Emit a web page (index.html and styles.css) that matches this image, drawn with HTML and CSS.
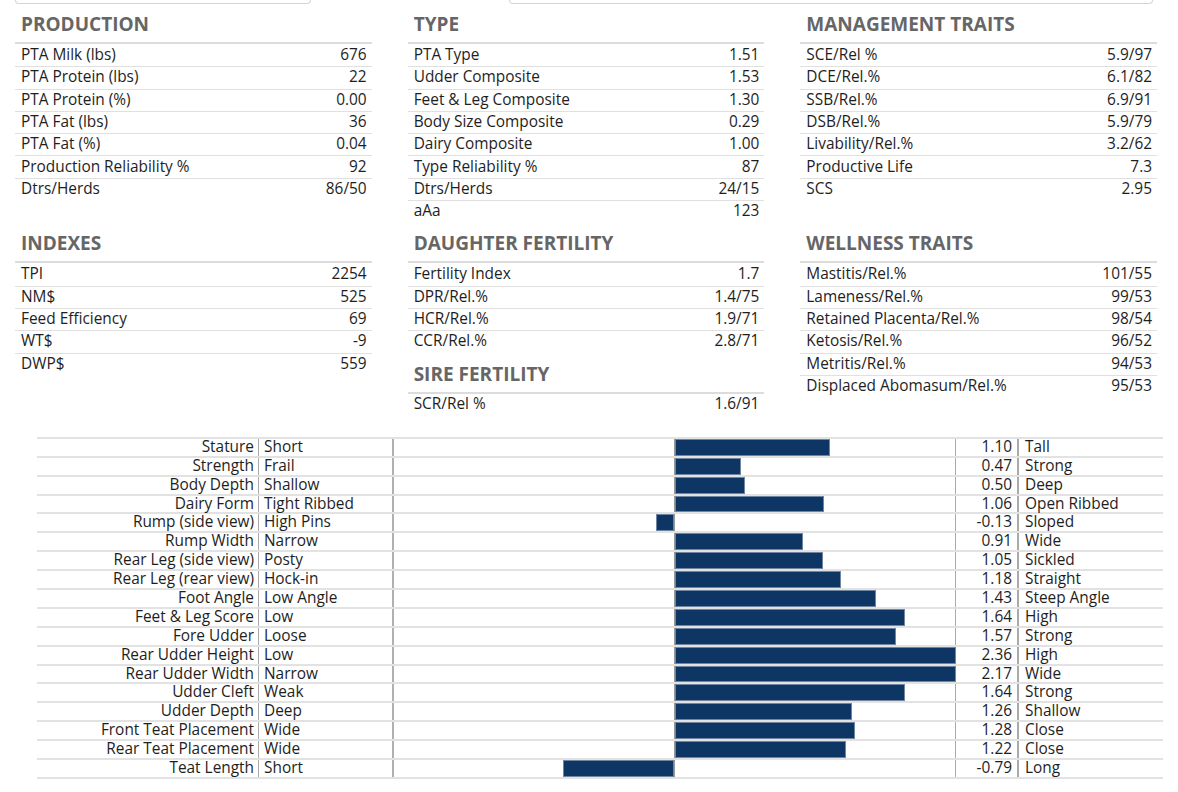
FILE: index.html
```html
<!DOCTYPE html>
<html lang="en">
<head>
<meta charset="utf-8">
<title>Sire Proof</title>
<link rel="stylesheet" href="styles.css">
</head>
<body>
<div class="topbar">
  <div class="topbox topbox-left"></div>
  <div class="topbox topbox-right"></div>
</div>

<div class="sections">
  <section class="sec">
    <h2 class="sec-title">PRODUCTION</h2>
    <div class="tbl">
      <div class="row"><span>PTA Milk (lbs)</span><span>676</span></div>
      <div class="row"><span>PTA Protein (lbs)</span><span>22</span></div>
      <div class="row"><span>PTA Protein (%)</span><span>0.00</span></div>
      <div class="row"><span>PTA Fat (lbs)</span><span>36</span></div>
      <div class="row"><span>PTA Fat (%)</span><span>0.04</span></div>
      <div class="row"><span>Production Reliability %</span><span>92</span></div>
      <div class="row"><span>Dtrs/Herds</span><span>86/50</span></div>
    </div>
  </section>
  <section class="sec">
    <h2 class="sec-title">TYPE</h2>
    <div class="tbl">
      <div class="row"><span>PTA Type</span><span>1.51</span></div>
      <div class="row"><span>Udder Composite</span><span>1.53</span></div>
      <div class="row"><span>Feet &amp; Leg Composite</span><span>1.30</span></div>
      <div class="row"><span>Body Size Composite</span><span>0.29</span></div>
      <div class="row"><span>Dairy Composite</span><span>1.00</span></div>
      <div class="row"><span>Type Reliability %</span><span>87</span></div>
      <div class="row"><span>Dtrs/Herds</span><span>24/15</span></div>
      <div class="row"><span>aAa</span><span>123</span></div>
    </div>
  </section>
  <section class="sec">
    <h2 class="sec-title">MANAGEMENT TRAITS</h2>
    <div class="tbl">
      <div class="row"><span>SCE/Rel %</span><span>5.9/97</span></div>
      <div class="row"><span>DCE/Rel.%</span><span>6.1/82</span></div>
      <div class="row"><span>SSB/Rel.%</span><span>6.9/91</span></div>
      <div class="row"><span>DSB/Rel.%</span><span>5.9/79</span></div>
      <div class="row"><span>Livability/Rel.%</span><span>3.2/62</span></div>
      <div class="row"><span>Productive Life</span><span>7.3</span></div>
      <div class="row"><span>SCS</span><span>2.95</span></div>
    </div>
  </section>

  <section class="sec">
    <h2 class="sec-title">INDEXES</h2>
    <div class="tbl">
      <div class="row"><span>TPI</span><span>2254</span></div>
      <div class="row"><span>NM$</span><span>525</span></div>
      <div class="row"><span>Feed Efficiency</span><span>69</span></div>
      <div class="row"><span>WT$</span><span>-9</span></div>
      <div class="row"><span>DWP$</span><span>559</span></div>
    </div>
  </section>
  <div class="stack">
    <section class="sec">
      <h2 class="sec-title">DAUGHTER FERTILITY</h2>
      <div class="tbl">
        <div class="row"><span>Fertility Index</span><span>1.7</span></div>
        <div class="row"><span>DPR/Rel.%</span><span>1.4/75</span></div>
        <div class="row"><span>HCR/Rel.%</span><span>1.9/71</span></div>
        <div class="row"><span>CCR/Rel.%</span><span>2.8/71</span></div>
      </div>
    </section>
    <section class="sec">
      <h2 class="sec-title">SIRE FERTILITY</h2>
      <div class="tbl">
        <div class="row"><span>SCR/Rel %</span><span>1.6/91</span></div>
      </div>
    </section>
  </div>
  <section class="sec">
    <h2 class="sec-title">WELLNESS TRAITS</h2>
    <div class="tbl">
      <div class="row"><span>Mastitis/Rel.%</span><span>101/55</span></div>
      <div class="row"><span>Lameness/Rel.%</span><span>99/53</span></div>
      <div class="row"><span>Retained Placenta/Rel.%</span><span>98/54</span></div>
      <div class="row"><span>Ketosis/Rel.%</span><span>96/52</span></div>
      <div class="row"><span>Metritis/Rel.%</span><span>94/53</span></div>
      <div class="row"><span>Displaced Abomasum/Rel.%</span><span>95/53</span></div>
    </div>
  </section>
</div>

<div class="chart">
  <div class="crow"><div class="c-lab">Stature</div><div class="c-lo">Short</div><div class="c-bar"><div class="half neg"></div><div class="half pos"><div class="bar" style="width:154.6px"></div></div></div><div class="c-val">1.10</div><div class="c-hi">Tall</div></div>
  <div class="crow"><div class="c-lab">Strength</div><div class="c-lo">Frail</div><div class="c-bar"><div class="half neg"></div><div class="half pos"><div class="bar" style="width:66px"></div></div></div><div class="c-val">0.47</div><div class="c-hi">Strong</div></div>
  <div class="crow"><div class="c-lab">Body Depth</div><div class="c-lo">Shallow</div><div class="c-bar"><div class="half neg"></div><div class="half pos"><div class="bar" style="width:70.3px"></div></div></div><div class="c-val">0.50</div><div class="c-hi">Deep</div></div>
  <div class="crow"><div class="c-lab">Dairy Form</div><div class="c-lo">Tight Ribbed</div><div class="c-bar"><div class="half neg"></div><div class="half pos"><div class="bar" style="width:149px"></div></div></div><div class="c-val">1.06</div><div class="c-hi">Open Ribbed</div></div>
  <div class="crow"><div class="c-lab">Rump (side view)</div><div class="c-lo">High Pins</div><div class="c-bar"><div class="half neg"><div class="bar" style="width:18.3px"></div></div><div class="half pos"></div></div><div class="c-val">-0.13</div><div class="c-hi">Sloped</div></div>
  <div class="crow"><div class="c-lab">Rump Width</div><div class="c-lo">Narrow</div><div class="c-bar"><div class="half neg"></div><div class="half pos"><div class="bar" style="width:127.9px"></div></div></div><div class="c-val">0.91</div><div class="c-hi">Wide</div></div>
  <div class="crow"><div class="c-lab">Rear Leg (side view)</div><div class="c-lo">Posty</div><div class="c-bar"><div class="half neg"></div><div class="half pos"><div class="bar" style="width:147.5px"></div></div></div><div class="c-val">1.05</div><div class="c-hi">Sickled</div></div>
  <div class="crow"><div class="c-lab">Rear Leg (rear view)</div><div class="c-lo">Hock-in</div><div class="c-bar"><div class="half neg"></div><div class="half pos"><div class="bar" style="width:165.8px"></div></div></div><div class="c-val">1.18</div><div class="c-hi">Straight</div></div>
  <div class="crow"><div class="c-lab">Foot Angle</div><div class="c-lo">Low Angle</div><div class="c-bar"><div class="half neg"></div><div class="half pos"><div class="bar" style="width:200.9px"></div></div></div><div class="c-val">1.43</div><div class="c-hi">Steep Angle</div></div>
  <div class="crow"><div class="c-lab">Feet &amp; Leg Score</div><div class="c-lo">Low</div><div class="c-bar"><div class="half neg"></div><div class="half pos"><div class="bar" style="width:230.4px"></div></div></div><div class="c-val">1.64</div><div class="c-hi">High</div></div>
  <div class="crow"><div class="c-lab">Fore Udder</div><div class="c-lo">Loose</div><div class="c-bar"><div class="half neg"></div><div class="half pos"><div class="bar" style="width:220.6px"></div></div></div><div class="c-val">1.57</div><div class="c-hi">Strong</div></div>
  <div class="crow"><div class="c-lab">Rear Udder Height</div><div class="c-lo">Low</div><div class="c-bar"><div class="half neg"></div><div class="half pos"><div class="bar" style="width:281px"></div></div></div><div class="c-val">2.36</div><div class="c-hi">High</div></div>
  <div class="crow"><div class="c-lab">Rear Udder Width</div><div class="c-lo">Narrow</div><div class="c-bar"><div class="half neg"></div><div class="half pos"><div class="bar" style="width:281px"></div></div></div><div class="c-val">2.17</div><div class="c-hi">Wide</div></div>
  <div class="crow"><div class="c-lab">Udder Cleft</div><div class="c-lo">Weak</div><div class="c-bar"><div class="half neg"></div><div class="half pos"><div class="bar" style="width:230.4px"></div></div></div><div class="c-val">1.64</div><div class="c-hi">Strong</div></div>
  <div class="crow"><div class="c-lab">Udder Depth</div><div class="c-lo">Deep</div><div class="c-bar"><div class="half neg"></div><div class="half pos"><div class="bar" style="width:177px"></div></div></div><div class="c-val">1.26</div><div class="c-hi">Shallow</div></div>
  <div class="crow"><div class="c-lab">Front Teat Placement</div><div class="c-lo">Wide</div><div class="c-bar"><div class="half neg"></div><div class="half pos"><div class="bar" style="width:179.8px"></div></div></div><div class="c-val">1.28</div><div class="c-hi">Close</div></div>
  <div class="crow"><div class="c-lab">Rear Teat Placement</div><div class="c-lo">Wide</div><div class="c-bar"><div class="half neg"></div><div class="half pos"><div class="bar" style="width:171.4px"></div></div></div><div class="c-val">1.22</div><div class="c-hi">Close</div></div>
  <div class="crow"><div class="c-lab">Teat Length</div><div class="c-lo">Short</div><div class="c-bar"><div class="half neg"><div class="bar" style="width:111px"></div></div><div class="half pos"></div></div><div class="c-val">-0.79</div><div class="c-hi">Long</div></div>
</div>
</body>
</html>
```

FILE: styles.css
```css
* { box-sizing: border-box; }
html, body { margin: 0; padding: 0; background: #fff; }
body {
  font-family: "Open Sans", "Noto Sans", "Liberation Sans", sans-serif;
  font-size: 15.4px;
  color: #1e1e1e;
}

.topbar {
  display: flex;
  height: 4px;
  padding-left: 15px;
}
.topbox {
  height: 4px;
  border: 1px solid #d5d5d5;
  border-top: none;
  border-radius: 0 0 4px 4px;
}
.topbox-left { width: 296px; }
.topbox-right { width: 644px; margin-left: 198px; }

.sections {
  display: grid;
  grid-template-columns: repeat(3, 1fr);
  column-gap: 36px;
  row-gap: 8px;
  width: 1142px;
  margin: 7px 0 0 15px;
}
.stack { display: flex; flex-direction: column; gap: 8px; }

.sec-title {
  margin: 0 0 5px 0;
  padding-left: 6px;
  font-size: 19px;
  line-height: 26px;
  font-weight: 700;
  color: #666;
  letter-spacing: 0;
}
.tbl { border-top: 2.5px solid #dcdcdc; }
.row {
  display: flex;
  justify-content: space-between;
  align-items: center;
  height: 22.3px;
  padding: 0 5px 1px 6px;
  line-height: 20px;
  white-space: nowrap;
}
.row + .row { border-top: 1px solid #e0e0e0; }

.chart {
  width: 1126px;
  margin: 21px 0 0 37px;
  border-bottom: 2px solid #e2e2e2;
}
.crow {
  display: grid;
  grid-template-columns: 222px 135px 562px 63px 144px;
  height: 18.9px;
  border-top: 2px solid #e2e2e2;
  line-height: 15px;
}
.c-lab {
  text-align: right;
  padding-right: 4px;
  border-right: 1px solid #aaa;
  white-space: nowrap;
}
.c-lo {
  padding-left: 5px;
  border-right: 2px solid #b0b0b0;
  white-space: nowrap;
}
.c-bar {
  display: flex;
  border-right: 1px solid #aaa;
}
.half { width: 280px; display: flex; }
.neg { justify-content: flex-end; }
.pos { border-left: 1px solid #999; }
.bar {
  height: 100%;
  background: #0d3665;
  border: 1px solid #6f85a2;
  flex: none;
}
.c-val {
  text-align: right;
  padding-right: 5px;
  border-right: 2px solid #aaa;
}
.c-hi {
  padding-left: 6px;
  white-space: nowrap;
}
```
